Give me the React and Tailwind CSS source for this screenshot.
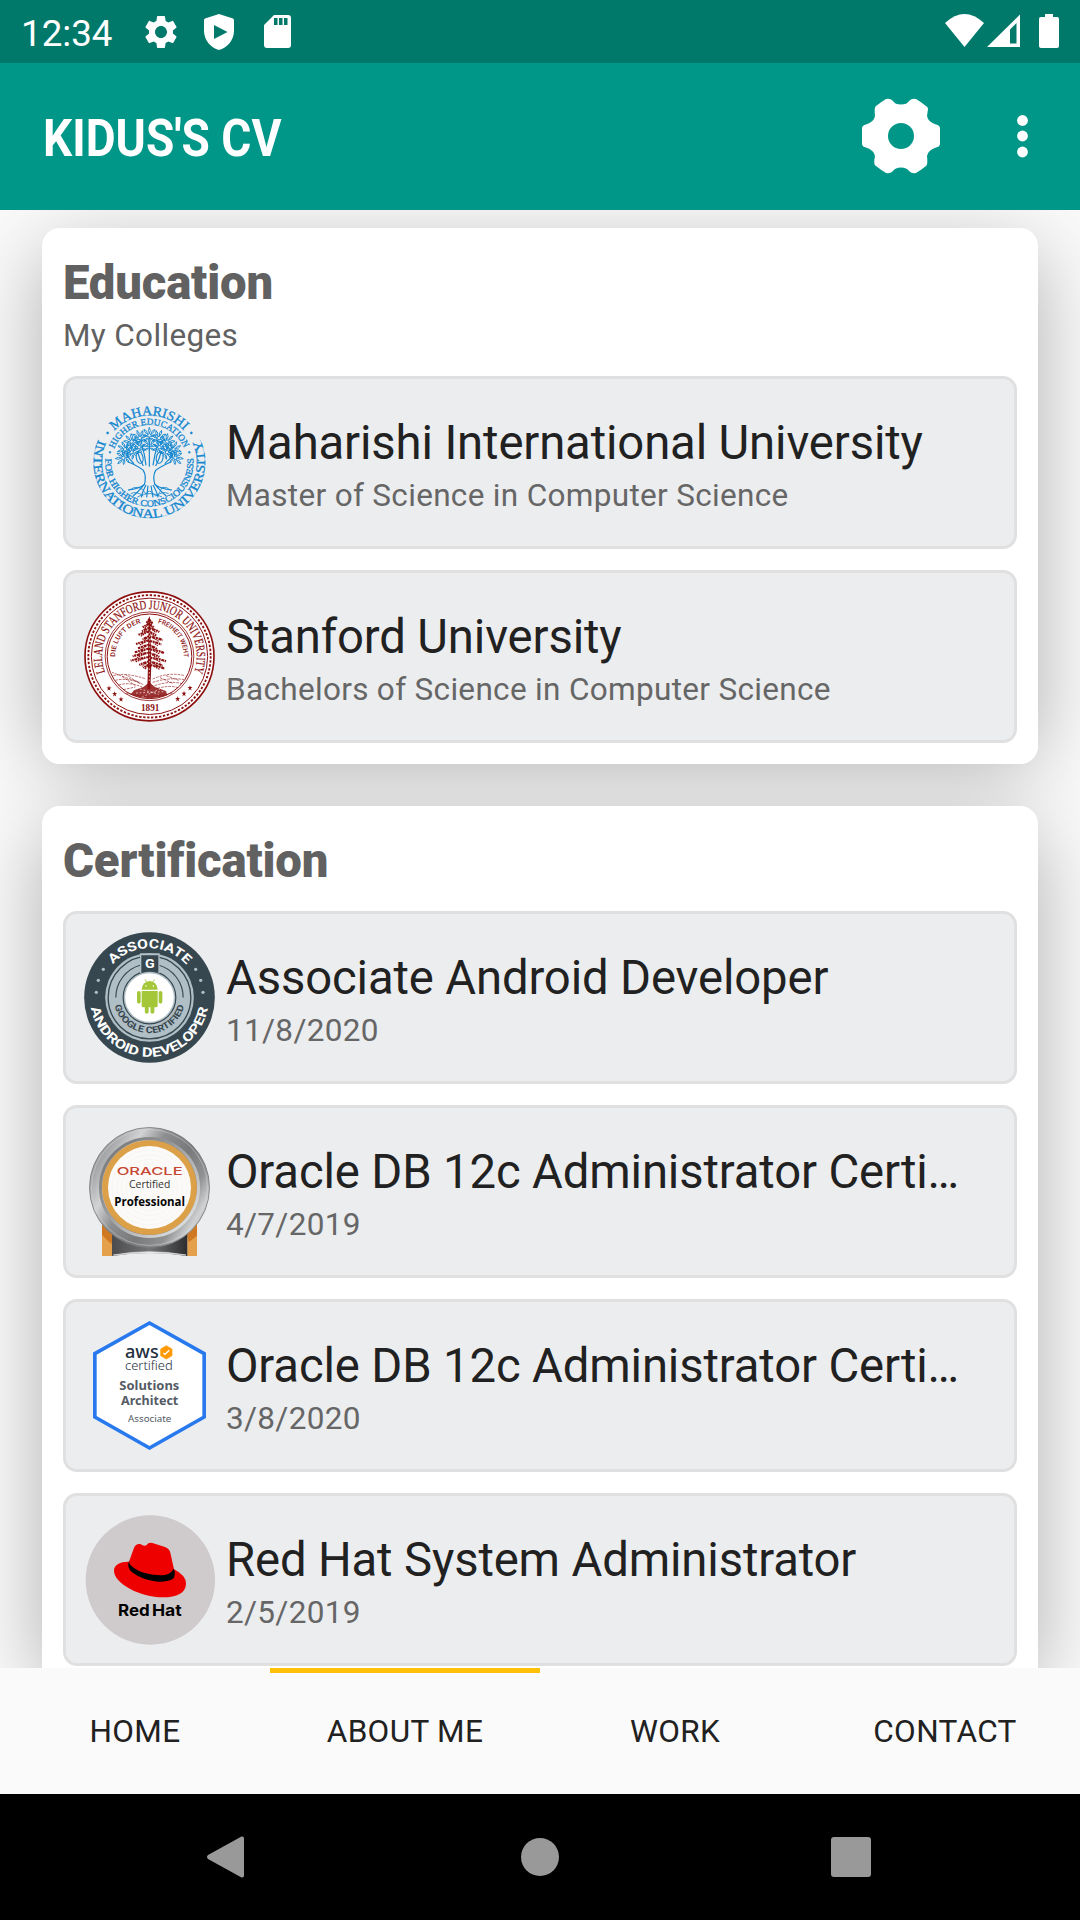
import React from "react";

const rad = (d) => (d * Math.PI) / 180;

// Arc between two angles measured clockwise from twelve o'clock.
function arc(cx, cy, r, from, to, ccw) {
  const p = (a) => `${(cx + r * Math.sin(rad(a))).toFixed(2)} ${(cy - r * Math.cos(rad(a))).toFixed(2)}`;
  const span = ccw ? 360 - Math.abs(to - from) : Math.abs(to - from);
  return { d: `M${p(from)}A${r} ${r} 0 ${span > 180 ? 1 : 0} ${ccw ? 0 : 1} ${p(to)}`, len: rad(span) * r };
}

function ArcText({ id, cx, cy, r, from, to, ccw, children, ...rest }) {
  const { d, len } = arc(cx, cy, r, from, to, ccw);
  return (
    <>
      <path id={id} d={d} fill="none" />
      <text {...rest}>
        <textPath href={`#${id}`} textLength={len - 1} lengthAdjust="spacingAndGlyphs">{children}</textPath>
      </text>
    </>
  );
}

const SERIF = '"Liberation Serif", serif';
const SANS = "Roboto, sans-serif";

function MaharishiSeal() {
  const c = "#1487cf";
  const clusters = [
    [268, 192, 0], [238, 200, -20], [298, 200, 20], [212, 212, -45], [324, 212, 45],
    [192, 236, -65], [344, 236, 65], [186, 264, -95], [350, 264, 95], [236, 228, -25],
    [300, 228, 25], [212, 244, -50], [324, 244, 50], [268, 222, 0],
  ];
  return (
    <svg viewBox="72 81 393 393" className="size-full">
      <g fill={c} stroke={c} strokeWidth=".9" fontFamily={SERIF}>
        <ArcText id="m1" cx={268} cy={277} r={141} from={-48} to={48} fontSize="40">MAHARISHI</ArcText>
        <ArcText id="m2" cx={268} cy={277} r={167} from={-66} to={66} ccw fontSize="38">INTERNATIONAL UNIVERSITY</ArcText>
        <ArcText id="m3" cx={268} cy={277} r={113} from={-69} to={68} fontSize="27">HIGHER EDUCATION</ArcText>
        <ArcText id="m4" cx={268} cy={277} r={132} from={-85} to={84} ccw fontSize="27">FOR HIGHER CONSCIOUSNESS</ArcText>
        <circle cx="143" cy="189" r="3.5" /><circle cx="394" cy="189" r="3.5" />
        <circle cx="150" cy="247" r="3" /><circle cx="388" cy="247" r="3" />
      </g>
      <g fill="none" stroke={c} strokeWidth="3.5">
        <path d="M253 345Q260 318 250 301Q238 290 204 275M285 345Q277 318 287 301Q300 290 334 275M250 288Q238 268 232 243M287 288Q298 268 304 243M268 290V215M258 286Q254 252 246 226M279 286Q284 252 292 226M222 281Q206 266 198 252M314 281Q332 266 340 252" />
        <path d="M253 343Q238 356 204 360M285 343Q300 356 336 360M253 343Q234 366 219 378M285 343Q304 366 319 378M258 345Q246 368 244 382M279 345Q292 368 294 382M264 347L260 382M273 347L279 382" />
        <path d="M206 361Q222 350 235 352T258 372Q268 355 280 372T306 352Q322 350 332 361" strokeWidth="2.5" />
        <path d="M212 371Q230 362 250 378M326 371Q308 362 288 378M232 381Q268 360 306 381" strokeWidth="2.5" />
        {clusters.map(([x, y, a], i) => (
          <g key={i} transform={`translate(${x} ${y}) rotate(${a})`} strokeWidth="2.6">
            <circle cx="0" cy="4" r="5" />
            <path d="M0 -2Q-6 -11 0 -20Q6 -11 0 -2M-5 1Q-16 -4 -16 -14Q-6 -11 -5 1M5 1Q16 -4 16 -14Q6 -11 5 1M-5 7Q-14 10 -20 3Q-12 -1 -5 7M5 7Q14 10 20 3Q12 -1 5 7M-3 12Q-6 20 -15 19Q-12 12 -3 12M3 12Q6 20 15 19Q12 12 3 12M0 10V22" />
          </g>
        ))}
        <ellipse cx="239" cy="263" rx="10" ry="17" transform="rotate(-12 239 263)" />
        <ellipse cx="299" cy="263" rx="10" ry="17" transform="rotate(12 299 263)" />
      </g>
    </svg>
  );
}

function Star({ x, y }) {
  return <path transform={`translate(${x} ${y}) scale(.95)`} d="M0-9L2-3H8L3 1L5 8L0 4L-5 8L-3 1L-8-3H-2Z" />;
}

// Conifer boughs: [height on trunk, reach to the left, reach to the right].
const boughs = [
  [168, 8, 9], [181, 20, 14], [193, 22, 30], [204, 34, 20], [218, 20, 40], [231, 40, 36],
  [244, 34, 22], [256, 44, 44], [268, 50, 30], [281, 56, 50], [294, 30, 40], [303, 18, 46],
];

function StanfordSeal() {
  const c = "#8c1010";
  return (
    <svg viewBox="72 78 393 393" className="size-full">
      <circle cx="268.500" cy="274" r="195" fill="#fff" />
      <g fill="none" stroke={c}>
        <circle cx="268.500" cy="274" r="193.500" strokeWidth="5" />
        <circle cx="268.500" cy="274" r="183.500" strokeWidth="5.500" strokeDasharray="7 5" />
        <circle cx="268.500" cy="274" r="174.500" strokeWidth="3" />
        <circle cx="268.500" cy="274" r="133" strokeWidth="2.500" />
        <circle cx="268.500" cy="274" r="127" strokeWidth="3" />
      </g>
      <g fill={c}>
        <ArcText id="s1" cx={268.5} cy={274} r={142} from={-110} to={110} fontFamily={SERIF} fontSize="38" stroke={c} strokeWidth=".6">LELAND STANFORD JUNIOR UNIVERSITY</ArcText>
        <ArcText id="s2" cx={268.5} cy={274} r={103} from={-91} to={-14} fontFamily={SANS} fontSize="20" fontWeight="500">DIE LUFT DER</ArcText>
        <ArcText id="s3" cx={268.5} cy={274} r={103} from={14} to={92} fontFamily={SANS} fontSize="20" fontWeight="500">FREIHEIT WEHT</ArcText>
        <text x="243" y="438" fontFamily={SERIF} fontSize="31" fontWeight="700" textLength="55" lengthAdjust="spacingAndGlyphs">1891</text>
        <Star x={147} y={370} /><Star x={164} y={387} /><Star x={183} y={403} />
        <Star x={353} y={402} /><Star x={372} y={386} /><Star x={390} y={369} />
        <path d="M266 160L268 153L270 160L274 300L271 372H262L264 300Z" />
        <path d="M268 352L285 366L318 378L322 390Q268 410 212 388L222 376L250 366Z" opacity=".85" />
      </g>
      <g fill="none" stroke={c}>
        {boughs.map(([y, l, r], i) => (
          <g key={i}>
            <path strokeWidth="6.500" strokeDasharray={i % 2 ? "9 2 5 2" : "6 2 10 2"} d={`M268 ${y - 5}Q${268 - l * 0.6} ${y} ${268 - l} ${y + 6}M268 ${y - 3}Q${268 + r * 0.6} ${y} ${268 + r} ${y + 8}`} />
            <path strokeWidth="3.500" strokeDasharray="5 2" d={`M${268 - l * 0.3} ${y}L${268 - l * 0.75} ${y + 10}M${268 + r * 0.3} ${y + 1}L${268 + r * 0.7} ${y + 11}`} />
          </g>
        ))}
      </g>
      <g fill="none" stroke="#fff" strokeWidth="2" strokeDasharray="5 6">
        <path d="M269 200V300M268 310V350M228 384L310 380M240 372L296 388M246 396L300 372" />
      </g>
      <g fill="none" stroke={c} strokeWidth="1.800" strokeDasharray="8 3">
        <path d="M160 332Q200 322 258 342M156 322Q190 336 240 352M166 346Q205 336 252 360M176 360Q210 350 246 366M278 342Q326 320 374 332M278 352Q330 336 372 344M284 362Q330 346 366 356M292 370Q328 360 354 368M190 374L226 366M198 384Q268 404 338 384M186 334L226 362M196 328L240 356M300 338L340 356M318 332L356 346" />
      </g>
    </svg>
  );
}

function AndroidBadge() {
  const dark = "#37474f";
  return (
    <svg viewBox="72 66 393 393" className="size-full">
      <circle cx="268.500" cy="262.500" r="196" fill={dark} />
      <circle cx="268.500" cy="262.500" r="133" fill="#b0bec5" />
      <g fill="none" stroke={dark} strokeWidth="3.500">
        <circle cx="268.500" cy="262.500" r="124" strokeWidth="4" />
        <path d={arc(268.5, 262.5, 101, -90, -15).d} />
        <path d={arc(268.5, 262.5, 101, 15, 90).d} />
        <circle cx="268.500" cy="262.500" r="79" />
      </g>
      <circle cx="268.500" cy="262.500" r="73" fill="#fff" />
      <path d="M240 130H299V190Q268 182 240 190Z" fill="#b0bec5" />
      <path d="M244 136H295V189Q268 181 244 189Z" fill={dark} />
      <text x="255" y="173" fill="#fff" fontFamily={SANS} fontSize="40" fontWeight="700" textLength="29" lengthAdjust="spacingAndGlyphs">G</text>
      <g fill="#fff" fontFamily={SANS}>
        <ArcText id="a1" cx={268.5} cy={262.5} r={148} from={-48} to={49} fontSize="39" fontWeight="700">ASSOCIATE</ArcText>
        <ArcText id="a2" cx={268.5} cy={262.5} r={178} from={-100} to={100} ccw fontSize="39" fontWeight="700">ANDROID DEVELOPER</ArcText>
      </g>
      <ArcText id="a3" cx={268.5} cy={262.5} r={107} from={-103} to={103} ccw fontFamily={SANS} fontSize="27" fontWeight="700" fill={dark}>GOOGLE CERTIFIED</ArcText>
      <g fill="#b0bec5">
        {[[130, 178], [115, 211], [109, 247], [407, 178], [422, 211], [429, 247]].map(([x, y]) => <circle key={x} cx={x} cy={y} r="5" />)}
      </g>
      <g fill="#a4c639">
        <path d="M245 239A24 26 0 0 1 293 239Z" />
        <path d="M255 208L260 217M284 208L278 217" stroke="#a4c639" strokeWidth="2.500" />
        <path d="M245 243H293V287Q293 292 288 292H283V307A6 6 0 0 1 271.500 307V292H266V307A6 6 0 0 1 254.500 307V292H250Q245 292 245 287Z" />
        <rect x="231" y="243" width="11" height="38" rx="5.500" /><rect x="296" y="243" width="11" height="38" rx="5.500" />
      </g>
      <circle cx="258" cy="228" r="2.300" fill="#fff" /><circle cx="280" cy="228" r="2.300" fill="#fff" />
    </svg>
  );
}

function OracleBadge() {
  return (
    <svg viewBox="72 63 393 393" className="size-full">
      <defs>
        <linearGradient id="metal" x1="0" y1=".2" x2="1" y2=".8">
          <stop offset="0" stopColor="#8b8d8f" /><stop offset=".12" stopColor="#a9abad" /><stop offset=".25" stopColor="#d2d3d4" /><stop offset=".4" stopColor="#8d8f91" />
          <stop offset=".6" stopColor="#77797b" /><stop offset=".78" stopColor="#8f9193" /><stop offset=".9" stopColor="#d0d1d3" /><stop offset="1" stopColor="#9b9da0" />
        </linearGradient>
        <linearGradient id="rim" x1="0" y1="0" x2="1" y2="1">
          <stop offset="0" stopColor="#6e7072" /><stop offset=".4" stopColor="#98999b" /><stop offset="1" stopColor="#eceded" />
        </linearGradient>
        <linearGradient id="strap"><stop offset="0" stopColor="#4c4c4e" /><stop offset=".5" stopColor="#747577" /><stop offset="1" stopColor="#2d2d2f" /></linearGradient>
      </defs>
      <path d="M126 350H156V453H126ZM382 350H411V453H382Z" fill="#e4a04b" />
      <path d="M126 352L160 380L154 418L126 390ZM411 352L380 380L386 412L411 392Z" fill="#cf7a22" />
      <path d="M156 370H382V453Q268 435 156 453Z" fill="url(#strap)" />
      <path d="M160 450Q268 430 378 450Q268 438 160 450Z" fill="#eee" stroke="#ddd" strokeWidth="2" />
      <circle cx="268.500" cy="247.500" r="180" fill="url(#metal)" stroke="#77797b" strokeWidth="2.500" />
      <circle cx="268.500" cy="247.500" r="174" fill="none" stroke="#d5d6d7" strokeWidth="2" opacity=".7" />
      <circle cx="268.500" cy="247.500" r="147" fill="none" stroke="url(#rim)" strokeWidth="9" />
      <circle cx="268.500" cy="247.500" r="142" fill="#dca049" />
      <circle cx="268.500" cy="247.500" r="124.500" fill="#fbfaf8" />
      <g fill="none" stroke="#f1f0ed" strokeWidth="1.500">
        {[28, 42, 56, 70, 84, 98, 112].map((r) => <circle key={r} cx="268.500" cy="247.500" r={r} />)}
      </g>
      <text x="170" y="209" fontFamily="Inter, sans-serif" fontSize="33" fontWeight="500" fill="#c74634" textLength="198" lengthAdjust="spacingAndGlyphs">ORACLE</text>
      <text x="207" y="249" fontFamily='"Open Sans", sans-serif' fontSize="35" fill="#333" textLength="124" lengthAdjust="spacingAndGlyphs">Certified</text>
      <text x="163" y="303" fontFamily='"Open Sans", sans-serif' fontSize="37" fontWeight="700" fill="#050505" textLength="212" lengthAdjust="spacingAndGlyphs">Professional</text>
    </svg>
  );
}

function AwsBadge() {
  const f = '"Noto Sans", sans-serif';
  return (
    <svg viewBox="72 60 393 393" className="size-full" fontFamily={f}>
      <path d="M268.500 69L432.500 161V351L268.500 444L104.500 351V161Z" fill="#fff" stroke="#2878ee" strokeWidth="11" />
      <text x="195" y="173" fontSize="54" fontWeight="500" fill="#232f3e" textLength="101" lengthAdjust="spacingAndGlyphs">aws</text>
      <path d="M319 137L336 147V167L319 177L302 167V147Z" fill="#ff9a05" stroke="#ff9a05" strokeWidth="2" strokeLinejoin="round" />
      <path d="M310 159L315 163L328 151" fill="none" stroke="#fff" strokeWidth="4" />
      <text x="195" y="210" fontSize="39" fontWeight="300" fill="#232f3e" textLength="143" lengthAdjust="spacingAndGlyphs">certified</text>
      <g fill="#545b64" fontWeight="700">
        <text x="178" y="270" fontSize="39" textLength="180" lengthAdjust="spacingAndGlyphs">Solutions</text>
        <text x="183" y="315" fontSize="39" textLength="172" lengthAdjust="spacingAndGlyphs">Architect</text>
      </g>
      <text x="204" y="366" fontSize="29" fill="#545b64" textLength="130" lengthAdjust="spacingAndGlyphs">Associate</text>
    </svg>
  );
}

function RedHatBadge() {
  return (
    <svg viewBox="72 72 393 393" className="size-full">
      <circle cx="271" cy="270" r="194" fill="#cfcacb" />
      <path d="M207 215L221 176Q226 160 241 162Q252 170 260 165Q265 157 277 159L315 171Q328 176 331 188L342 238Q378 256 378 281C378 309 350 322 310 322C240 322 162 280 162 242C162 222 184 214 207 215Z" fill="#e00" />
      <path d="M208 210Q205 218 212 226C228 243 264 256 303 256Q329 256 342 236Q349 258 337 268Q322 276 294 275Q248 271 216 247Q199 232 208 210Z" fill="#000" />
      <text x="174" y="377" fontFamily="Inter, sans-serif" fontSize="49" fontWeight="700" textLength="95" lengthAdjust="spacingAndGlyphs">Red</text>
      <text x="276" y="377" fontFamily="Inter, sans-serif" fontSize="49" fontWeight="700" textLength="89" lengthAdjust="spacingAndGlyphs">Hat</text>
    </svg>
  );
}

function Item({ badge, title, detail }) {
  return (
    <div className="flex h-[173px] items-start rounded-[14px] border-[3px] border-[#e0e0e0] bg-[#ecedef] pt-[18px] pl-[18px]">
      <div className="size-[131px] shrink-0">{badge}</div>
      <div className="min-w-0 flex-1 pt-[19px] pl-[11px] whitespace-nowrap">
        <div className="text-[47.25px] leading-[55px] tracking-[-0.14px] text-[#212121]">{title}</div>
        <div className="mt-[6px] text-[31.5px] leading-[37px] tracking-[0.32px] text-[#666]">{detail}</div>
      </div>
    </div>
  );
}

function Card({ title, subtitle, children }) {
  return (
    <section className="relative before:absolute before:inset-x-0 before:top-[24px] before:bottom-0 before:-z-10 before:rounded-[18px] before:shadow-[0_0_82px_rgba(0,0,0,0.3)]">
      <div className="rounded-[18px] bg-white px-[21px] pt-[28px] pb-[21px]">
        <h2 className="text-[47.25px] leading-[55px] font-black tracking-[-0.16px] text-[#616161]">{title}</h2>
        {subtitle && <p className="mt-[6px] text-[31.5px] leading-[37px] tracking-[0.34px] text-[#616161]">{subtitle}</p>}
        <div className="mt-[22px] flex flex-col gap-[21px]">{children}</div>
      </div>
    </section>
  );
}

function StatusBar() {
  return (
    <div className="flex h-[63px] items-center bg-[#00796b] pl-[21px] text-white">
      <span className="mt-[3px] w-[120px] text-[36.75px] leading-[43px]">12:34</span>
      <svg className="size-10" viewBox="0 0 24 24" fill="currentColor"><path d="M19.140 12.940c.04-.3.060-.61.060-.94 0-.32-.02-.64-.07-.94l2.030-1.580c.18-.14.23-.41.120-.61l-1.920-3.320c-.12-.22-.37-.29-.59-.22l-2.390.96c-.5-.38-1.030-.7-1.620-.94L14.400 2.810c-.04-.24-.24-.41-.48-.41h-3.840c-.24 0-.43.17-.47.41L9.250 5.350C8.660 5.590 8.120 5.920 7.630 6.290L5.240 5.330c-.22-.08-.47 0-.59.22L2.740 8.870c-.12.21-.08.47.12.61l2.030 1.580c-.05.3-.09.63-.09.94s.02.64.070.94l-2.030 1.580c-.18.14-.23.41-.12.61l1.920 3.320c.12.22.37.29.59.22l2.390-.96c.5.38 1.030.7 1.620.94l.36 2.540c.05.24.24.41.48.41h3.840c.24 0 .44-.17.470-.41l.36-2.540c.59-.24 1.130-.56 1.620-.94l2.390.96c.22.080.47 0 .59-.22l1.920-3.320c.12-.22.070-.47-.12-.61l-2.010-1.580zM12 15.600c-1.980 0-3.600-1.620-3.600-3.600s1.620-3.600 3.600-3.600 3.600 1.620 3.600 3.600-1.620 3.600-3.600 3.600z" /></svg>
      <svg className="ml-[23px] h-9 w-[30px]" viewBox="0 0 30 36" fill="currentColor" fillRule="evenodd"><path d="M15 0L29 4.500Q30 5 30 6V17C30 26 23 34 15 36C7 34 0 26 0 17V6Q0 5 1 4.500ZM10 11V25L23.500 18Z" /></svg>
      <svg className="ml-[30px] h-[33px] w-[27px]" viewBox="0 0 27 33" fill="currentColor" fillRule="evenodd"><path d="M10 0H24Q27 0 27 3V30Q27 33 24 33H3Q0 33 0 30V10ZM10 3V10H13.500V3ZM15 3V10H18.500V3ZM20 3V10H23.500V3Z" /></svg>
      <svg className="mr-[21px] ml-auto h-[35px] w-[114px]" viewBox="945 14 114 35" fill="currentColor">
        <path d="M945 23Q964.500 5 984 23L964.500 47Z" />
        <path fillRule="evenodd" d="M1020 14.500V47H987ZM1016.500 23L1010 29.500V43.500H1016.500Z" />
        <path d="M1045 14H1053V17H1057Q1059 17 1059 19V46Q1059 48 1057 48H1041Q1039 48 1039 46V19Q1039 17 1041 17H1045Z" />
      </svg>
    </div>
  );
}

const gear = "M39 -8Q38.500 -11 35 -11.500Q27 -14 26 -20L27 -27Q27 -29 25 -30Q20 -34 15 -37Q11 -38 8 -35Q6 -31.500 0 -31.500Q-6 -31.500 -8 -35Q-11 -38 -15 -37Q-20 -34 -25 -30Q-27 -29 -26 -20Q-27 -14 -35 -11.500Q-38.500 -11 -39 -8V8Q-38.500 11 -35 11.500Q-27 14 -26 20Q-28 29 -25 30Q-20 34 -15 37Q-11 38 -8 35Q-6 31.500 0 31.500Q6 31.500 8 35Q11 38 15 37Q20 34 25 30Q27 29 26 20Q27 14 35 11.500Q38.500 11 39 8ZM13 0A13 13 0 1 0 -13 0A13 13 0 1 0 13 0Z";

function AppBar() {
  return (
    <header className="flex h-[147px] items-center bg-[#009688] pr-[50px] pl-[43px] text-white">
      <h1 className="mt-[3px] origin-left scale-x-[0.876] text-[52.5px] leading-[62px] font-bold whitespace-nowrap">KIDUS'S CV</h1>
      <svg className="mb-[2px] ml-auto h-20 w-20" viewBox="-40 -40 80 80" fill="currentColor" fillRule="evenodd"><path d={gear} /></svg>
      <svg className="mb-[1px] ml-[73px] h-[44px] w-4" viewBox="0 0 16 44" fill="currentColor"><circle cx="8.500" cy="6.500" r="5.400" /><circle cx="8.500" cy="22" r="5.400" /><circle cx="8.500" cy="38" r="5.400" /></svg>
    </header>
  );
}

const tabs = ["HOME", "ABOUT ME", "WORK", "CONTACT"];

export default function App() {
  return (
    <div className="flex h-[1920px] w-[1080px] flex-col overflow-hidden bg-[#fafafa] font-[Roboto,sans-serif]">
      <StatusBar />
      <AppBar />
      <main className="isolate flex h-[1458px] flex-col gap-[42px] overflow-hidden px-[42px] pt-[18px]">
        <Card title="Education" subtitle="My Colleges">
          <Item badge={<MaharishiSeal />} title="Maharishi International University" detail="Master of Science in Computer Science" />
          <Item badge={<StanfordSeal />} title="Stanford University" detail="Bachelors of Science in Computer Science" />
        </Card>
        <Card title="Certification">
          <Item badge={<AndroidBadge />} title="Associate Android Developer" detail="11/8/2020" />
          <Item badge={<OracleBadge />} title="Oracle DB 12c Administrator Certi…" detail="4/7/2019" />
          <Item badge={<AwsBadge />} title="Oracle DB 12c Administrator Certi…" detail="3/8/2020" />
          <Item badge={<RedHatBadge />} title="Red Hat System Administrator" detail="2/5/2019" />
        </Card>
      </main>
      <nav className="grid h-[126px] grid-cols-4 bg-[#fafafa] text-[31.5px] tracking-[0.35px] text-[#212121]">
        {tabs.map((t) => (
          <div key={t} className={t === "ABOUT ME" ? "flex items-center justify-center border-t-[5px] border-[#ffc107] pb-[3px]" : "flex items-center justify-center border-t-[5px] border-transparent pb-[3px]"}>
            {t}
          </div>
        ))}
      </nav>
      <div className="flex h-[126px] items-center justify-between bg-black pr-[209px] pl-[207px] text-[#999]">
        <svg className="h-[42px] w-[37px]" viewBox="0 0 37 42" fill="currentColor"><path d="M1 19L34.500 .5Q37 0 37 2.500V39.500Q37 42 34.500 41.500L1 23Q-1 21 1 19Z" /></svg>
        <svg className="ml-[4px] h-[38px] w-[38px]" viewBox="0 0 38 38" fill="currentColor"><circle cx="19" cy="19" r="19" /></svg>
        <svg className="size-10" viewBox="0 0 40 40" fill="currentColor"><rect width="40" height="40" rx="3" /></svg>
      </div>
    </div>
  );
}
